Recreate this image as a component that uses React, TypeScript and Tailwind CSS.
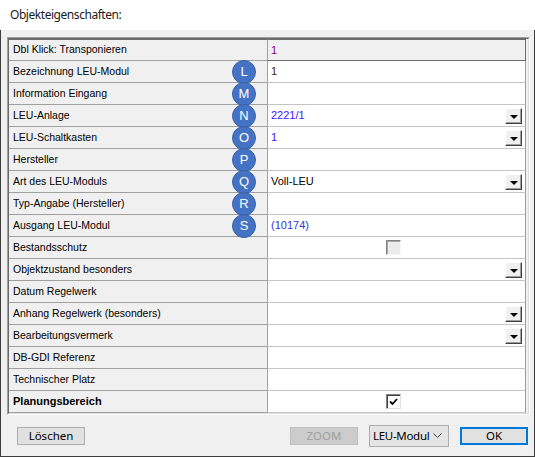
import React from "react";

type Row = {
  label: string;
  badge?: string;
  value?: string;
  color?: string;
  drop?: boolean;
  check?: "disabled" | "checked";
  bold?: boolean;
  header?: boolean;
};

const rows: Row[] = [
  { label: "Dbl Klick: Transponieren", value: "1", color: "text-[#800080]", header: true },
  { label: "Bezeichnung LEU-Modul", badge: "L", value: "1", color: "text-[#4a1a00]" },
  { label: "Information Eingang", badge: "M" },
  { label: "LEU-Anlage", badge: "N", value: "2221/1", color: "text-[#3c14ff]", drop: true },
  { label: "LEU-Schaltkasten", badge: "O", value: "1", color: "text-[#3c14ff]", drop: true },
  { label: "Hersteller", badge: "P" },
  { label: "Art des LEU-Moduls", badge: "Q", value: "Voll-LEU", color: "text-black", drop: true },
  { label: "Typ-Angabe (Hersteller)", badge: "R" },
  { label: "Ausgang LEU-Modul", badge: "S", value: "(10174)", color: "text-[#3434d0]" },
  { label: "Bestandsschutz", check: "disabled" },
  { label: "Objektzustand besonders", drop: true },
  { label: "Datum Regelwerk" },
  { label: "Anhang Regelwerk (besonders)", drop: true },
  { label: "Bearbeitungsvermerk", drop: true },
  { label: "DB-GDI Referenz" },
  { label: "Technischer Platz" },
  { label: "Planungsbereich", bold: true, check: "checked" },
];

function DropButton() {
  return (
    <div className="absolute right-[3px] top-[3px] w-[17px] h-[16px] flex items-center justify-center bg-[#f0f0f0] border border-t-white border-l-white border-r-[#404040] border-b-[#404040] shadow-[inset_-1px_-1px_0_#a0a0a0]">
      <div className="w-0 h-0 border-x-[4px] border-t-[4px] border-x-transparent border-t-black mt-[1px]" />
    </div>
  );
}

function PropRow({ row }: { row: Row }) {
  return (
    <div className="flex h-[22px]">
      <div
        className={`relative w-[258px] flex items-center pl-[4px] bg-[#f0f0f0] border-b border-b-[#a0a0a0] ${
          row.header ? "border-t border-t-[#6d6d6d]" : ""
        } ${row.bold ? "font-bold text-[11px]" : "text-[10.5px]"}`}
      >
        {row.label}
        {row.badge && (
          <div className="absolute left-[223px] top-[-1px] z-10 w-[24px] h-[24px] rounded-full bg-[#4472c4] border border-[#3a62a8] flex items-center justify-center text-white text-[13px] font-normal">
            {row.badge}
          </div>
        )}
      </div>
      <div
        className={`relative flex-1 flex items-center pl-[3px] border-l border-l-[#a0a0a0] border-r ${
          row.header
            ? "bg-[#f0f0f0] border-t border-t-[#6d6d6d] border-b border-b-[#6d6d6d] border-r-[#6d6d6d]"
            : "bg-white border-b border-b-[#c4c4c4] border-r-[#9a9a9a]"
        } text-[11px] ${row.color ?? ""}`}
      >
        {row.value}
        {row.drop && <DropButton />}
        {row.check === "disabled" && (
          <div className="absolute left-[118px] top-[3px] w-[15px] h-[15px] bg-[#ececec] border border-t-[#808080] border-l-[#808080] border-r-[#f8f8f8] border-b-[#f8f8f8] shadow-[inset_1px_1px_0_#a8a8a8]" />
        )}
        {row.check === "checked" && (
          <div className="absolute left-[118px] top-[3px] w-[15px] h-[15px] bg-white border border-t-[#808080] border-l-[#808080] border-r-[#e0e0e0] border-b-[#e0e0e0] shadow-[inset_1px_1px_0_#404040] flex items-center justify-center">
            <svg width="9" height="8" viewBox="0 0 9 8">
              <path d="M1 3.5 L3.5 6 L8 1" stroke="black" strokeWidth="1.8" fill="none" />
            </svg>
          </div>
        )}
      </div>
    </div>
  );
}

export default function App() {
  return (
    <div
      className="w-[535px] h-[457px] flex flex-col bg-[#f0f0f0] text-black"
      style={{ fontFamily: '"Liberation Sans", Arial, sans-serif' }}
    >
      <div
        className="h-[30px] bg-white flex items-center pl-[10px] text-[12px] tracking-[-0.45px] text-[#1a1a1a]"
        style={{ fontFamily: '"Noto Sans", "Liberation Sans", sans-serif' }}
      >
        Objekteigenschaften:
      </div>
      <div className="flex-1 flex flex-col border-x border-b border-[#3c3c3c]">
        <div className="mt-[7px] ml-[6px] mr-[4px] border border-t-[#a0a0a0] border-l-[#a0a0a0] border-r-white border-b-white">
          <div className="border border-t-[#696969] border-l-[#696969] border-r-[#dcdcdc] border-b-[#dcdcdc] pr-[2px]">
            {rows.map((r) => (
              <PropRow key={r.label} row={r} />
            ))}
          </div>
        </div>
        <div
          className="flex items-center mt-[10px] pl-[16px] pr-[6px] text-[11.5px] whitespace-nowrap"
          style={{ fontFamily: '"Noto Sans", "Liberation Sans", sans-serif' }}
        >
          <button className="w-[68px] h-[18px] bg-[#e1e1e1] border border-[#adadad] flex items-center justify-center leading-none">
            Löschen
          </button>
          <div className="flex-1" />
          <button className="w-[68px] h-[18px] bg-[#cccccc] border border-[#bfbfbf] text-[#a0a0a0] flex items-center justify-center leading-none">
            ZOOM
          </button>
          <div className="ml-[11px] w-[80px] h-[22px] bg-[#e5e5e5] border border-[#adadad] flex items-center justify-between pl-[3px] pr-[6px] tracking-[-0.3px]">
            <span className="leading-none">LEU-Modul</span>
            <svg width="9" height="6" viewBox="0 0 9 6">
              <path d="M0.5 0.5 L4.5 4.5 L8.5 0.5" stroke="#404040" strokeWidth="1" fill="none" />
            </svg>
          </div>
          <button className="ml-[11px] w-[68px] h-[18px] bg-[#e1e1e1] border-2 border-[#0078d7] flex items-center justify-center leading-none">
            OK
          </button>
        </div>
      </div>
    </div>
  );
}
